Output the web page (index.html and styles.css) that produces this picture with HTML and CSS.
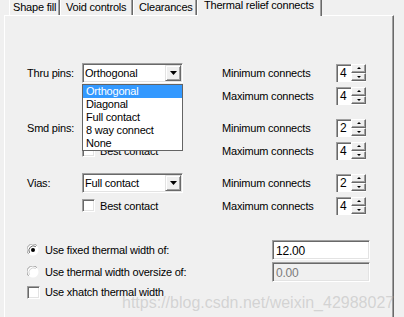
FILE: index.html
```html
<!DOCTYPE html>
<html lang="en">
<head>
  <meta charset="UTF-8">
  <title>Thermal relief connects</title>
  <link rel="stylesheet" href="styles.css">
</head>
<body>
  <div class="tabs">
    <div class="tab tab-shape">Shape fill</div>
    <div class="tab tab-void">Void controls</div>
    <div class="tab tab-clear">Clearances</div>
    <div class="tab tab-thermal active">Thermal relief connects</div>
  </div>

  <div class="panel">
    <div class="groups">
      <!-- Thru pins -->
      <div class="group">
        <div class="left">
          <div class="field-row">
            <span class="label">Thru pins:</span>
            <div class="combo-wrap">
              <div class="combo">
                <span class="combo-text">Orthogonal</span>
                <span class="drop-btn"><svg width="7" height="4" viewBox="0 0 7 4"><polygon points="0,0 7,0 3.5,4" fill="#000"/></svg></span>
              </div>
              <ul class="droplist">
                <li class="selected">Orthogonal</li>
                <li>Diagonal</li>
                <li>Full contact</li>
                <li>8 way connect</li>
                <li>None</li>
              </ul>
            </div>
          </div>
          <label class="check-row"><span class="checkbox"></span>Best contact</label>
        </div>
        <div class="right">
          <div class="spin-row"><span class="spin-label">Minimum connects</span><span class="spin"><span class="spin-edit">4</span><span class="spin-btns"><span class="spin-btn"><i class="up"></i></span><span class="spin-btn"><i class="down"></i></span></span></span></div>
          <div class="spin-row"><span class="spin-label">Maximum connects</span><span class="spin"><span class="spin-edit">4</span><span class="spin-btns"><span class="spin-btn"><i class="up"></i></span><span class="spin-btn"><i class="down"></i></span></span></span></div>
        </div>
      </div>

      <!-- Smd pins -->
      <div class="group">
        <div class="left">
          <div class="field-row">
            <span class="label">Smd pins:</span>
            <div class="combo-wrap">
              <div class="combo">
                <span class="combo-text">Orthogonal</span>
                <span class="drop-btn"><svg width="7" height="4" viewBox="0 0 7 4"><polygon points="0,0 7,0 3.5,4" fill="#000"/></svg></span>
              </div>
            </div>
          </div>
          <label class="check-row"><span class="checkbox"></span>Best contact</label>
        </div>
        <div class="right">
          <div class="spin-row"><span class="spin-label">Minimum connects</span><span class="spin"><span class="spin-edit">2</span><span class="spin-btns"><span class="spin-btn"><i class="up"></i></span><span class="spin-btn"><i class="down"></i></span></span></span></div>
          <div class="spin-row"><span class="spin-label">Maximum connects</span><span class="spin"><span class="spin-edit">4</span><span class="spin-btns"><span class="spin-btn"><i class="up"></i></span><span class="spin-btn"><i class="down"></i></span></span></span></div>
        </div>
      </div>

      <!-- Vias -->
      <div class="group">
        <div class="left">
          <div class="field-row">
            <span class="label">Vias:</span>
            <div class="combo-wrap">
              <div class="combo">
                <span class="combo-text">Full contact</span>
                <span class="drop-btn"><svg width="7" height="4" viewBox="0 0 7 4"><polygon points="0,0 7,0 3.5,4" fill="#000"/></svg></span>
              </div>
            </div>
          </div>
          <label class="check-row"><span class="checkbox"></span>Best contact</label>
        </div>
        <div class="right">
          <div class="spin-row"><span class="spin-label">Minimum connects</span><span class="spin"><span class="spin-edit">2</span><span class="spin-btns"><span class="spin-btn"><i class="up"></i></span><span class="spin-btn"><i class="down"></i></span></span></span></div>
          <div class="spin-row"><span class="spin-label">Maximum connects</span><span class="spin"><span class="spin-edit">4</span><span class="spin-btns"><span class="spin-btn"><i class="up"></i></span><span class="spin-btn"><i class="down"></i></span></span></span></div>
        </div>
      </div>
    </div>

    <div class="options">
      <div class="opt-row">
        <label class="opt"><svg class="radio" width="12" height="12" viewBox="0 0 12 12">
          <circle cx="6" cy="6" r="5.5" fill="#fff"/>
          <path d="M1.6,9.9 A5.5,5.5 0 0 1 9.9,1.6" fill="none" stroke="#a0a0a0"/>
          <path d="M2.6,8.8 A4.5,4.5 0 0 1 8.8,2.6" fill="none" stroke="#696969"/>
          <circle cx="6" cy="6" r="2" fill="#000"/>
        </svg>Use fixed thermal width of:</label>
        <span class="edit">12.00</span>
      </div>
      <div class="opt-row">
        <label class="opt"><svg class="radio" width="12" height="12" viewBox="0 0 12 12">
          <circle cx="6" cy="6" r="5.5" fill="#fff"/>
          <path d="M1.6,9.9 A5.5,5.5 0 0 1 9.9,1.6" fill="none" stroke="#a0a0a0"/>
          <path d="M2.6,8.8 A4.5,4.5 0 0 1 8.8,2.6" fill="none" stroke="#d4d4d4"/>
        </svg>Use thermal width oversize of:</label>
        <span class="edit disabled">0.00</span>
      </div>
      <div class="opt-row">
        <label class="opt"><span class="checkbox"></span>Use xhatch thermal width</label>
      </div>
    </div>
  </div>

  <div class="watermark">https://blog.csdn.net/weixin_42988027</div>
</body>
</html>
```

FILE: styles.css
```css
body {
  margin: 0;
  width: 404px;
  height: 317px;
  overflow: hidden;
  position: relative;
  background: #f0f0f0;
  font-family: 'Liberation Sans', Arial, sans-serif;
  font-size: 11px;
  letter-spacing: -0.2px;
  color: #000;
}

/* tabs */
.tabs {
  display: flex;
  align-items: flex-start;
  height: 15px;
  padding-left: 9px;
}
.tab {
  box-sizing: border-box;
  height: 15px;
  padding: 1px 0 0 3px;
  line-height: 13px;
  white-space: nowrap;
  border-left: 1px solid #fff;
  border-right: 1px solid #696969;
  box-shadow: inset -1px 0 #a0a0a0;
}
.tab-shape { width: 51px; }
.tab-void { width: 73px; padding-left: 5px; }
.tab-clear { width: 64px; padding-left: 5px; }
.tab.active {
  position: relative;
  z-index: 1;
  width: 125px;
  height: 17px;
  margin-top: -1px;
  padding: 0 0 0 6px;
  background: #f0f0f0;
}

/* panel */
.panel {
  box-sizing: border-box;
  margin-left: 4px;
  width: 390px;
  height: 302px;
  padding: 47px 0 0 22px;
  border-top: 1px solid #fff;
  border-left: 1px solid #fff;
  border-right: 1px solid #696969;
  box-shadow: inset -1px 0 #a0a0a0;
}
.groups {
  display: flex;
  flex-direction: column;
  gap: 13px;
}
.group {
  display: grid;
  grid-template-columns: 195px auto;
}
.field-row {
  display: flex;
  align-items: center;
  height: 20px;
}
.label {
  width: 55px;
}
.combo-wrap {
  position: relative;
}
.combo {
  box-sizing: border-box;
  display: flex;
  align-items: center;
  justify-content: space-between;
  width: 101px;
  height: 20px;
  padding: 0 0 0 2px;
  background: #fff;
  border-top: 1px solid #a0a0a0;
  border-left: 1px solid #a0a0a0;
  border-bottom: 1px solid #fff;
  border-right: 1px solid #fff;
  box-shadow: inset 1px 1px #696969, inset -1px -1px #e3e3e3;
}
.drop-btn {
  box-sizing: border-box;
  display: flex;
  align-items: center;
  justify-content: center;
  width: 16px;
  height: 16px;
  margin-right: 1px;
  background: #f0f0f0;
  border-top: 1px solid #e3e3e3;
  border-left: 1px solid #e3e3e3;
  border-right: 1px solid #696969;
  border-bottom: 1px solid #696969;
  box-shadow: inset 1px 1px #fff, inset -1px -1px #a0a0a0;
}
.droplist {
  position: absolute;
  z-index: 2;
  top: 21px;
  left: 0;
  width: 101px;
  box-sizing: border-box;
  margin: 0;
  padding: 0;
  list-style: none;
  background: #fff;
  border: 1px solid #646464;
}
.droplist li {
  height: 13px;
  line-height: 13px;
  padding-left: 3px;
}
.droplist li.selected {
  background: #3399ff;
  color: #fff;
}

.check-row {
  display: flex;
  align-items: center;
  margin: 6px 0 0 55px;
  height: 13px;
}
.checkbox {
  box-sizing: border-box;
  width: 13px;
  height: 13px;
  margin-right: 5px;
  background: #fff;
  border-top: 1px solid #a0a0a0;
  border-left: 1px solid #a0a0a0;
  border-bottom: 1px solid #fff;
  border-right: 1px solid #fff;
  box-shadow: inset 1px 1px #696969, inset -1px -1px #e3e3e3;
}

/* spin controls */
.right {
  display: flex;
  flex-direction: column;
  gap: 5px;
  padding-top: 1px;
}
.spin-row {
  display: flex;
  align-items: center;
  height: 18px;
}
.spin-label {
  width: 114px;
}
.spin {
  display: flex;
  height: 18px;
}
.spin-edit {
  box-sizing: border-box;
  width: 15px;
  height: 18px;
  padding: 2px 0 0 3px;
  line-height: 13px;
  font-size: 12px;
  background: #fff;
  border-top: 1px solid #a0a0a0;
  border-left: 1px solid #a0a0a0;
  box-shadow: inset 1px 1px #696969;
}
.spin-btns {
  display: flex;
  flex-direction: column;
  width: 15px;
  border-bottom: 1px solid #fff;
}
.spin-btn {
  box-sizing: border-box;
  display: flex;
  align-items: center;
  justify-content: center;
  height: 8.5px;
  flex: 1;
  background: #f0f0f0;
  border-top: 1px solid #fff;
  border-left: 1px solid #fff;
  border-right: 1px solid #696969;
  border-bottom: 1px solid #696969;
  box-shadow: inset -1px -1px #a0a0a0;
}
.spin-btn i {
  width: 0;
  height: 0;
  border-left: 2px solid transparent;
  border-right: 2px solid transparent;
}
.spin-btn .up { border-bottom: 2px solid #000; }
.spin-btn .down { border-top: 2px solid #000; }

/* bottom options */
.options {
  margin-top: 25px;
  display: flex;
  flex-direction: column;
  gap: 2px;
}
.opt-row {
  display: grid;
  grid-template-columns: 245px 98px;
  align-items: center;
  height: 20px;
}
.opt-row:last-child {
  height: 16px;
}
.opt {
  display: flex;
  align-items: center;
}
.radio {
  margin-right: 6px;
}
.edit {
  box-sizing: border-box;
  height: 20px;
  padding: 3px 0 0 3px;
  line-height: 14px;
  font-size: 12px;
  background: #fff;
  border-top: 1px solid #a0a0a0;
  border-left: 1px solid #a0a0a0;
  border-bottom: 1px solid #fff;
  border-right: 1px solid #fff;
  box-shadow: inset 1px 1px #696969, inset -1px -1px #e3e3e3;
}
.edit.disabled {
  background: #f0f0f0;
  color: #7a7a7a;
}

.watermark {
  position: absolute;
  left: 122px;
  top: 294px;
  font-size: 16px;
  letter-spacing: 0;
  color: rgba(175, 175, 175, 0.45);
  white-space: nowrap;
}
```
